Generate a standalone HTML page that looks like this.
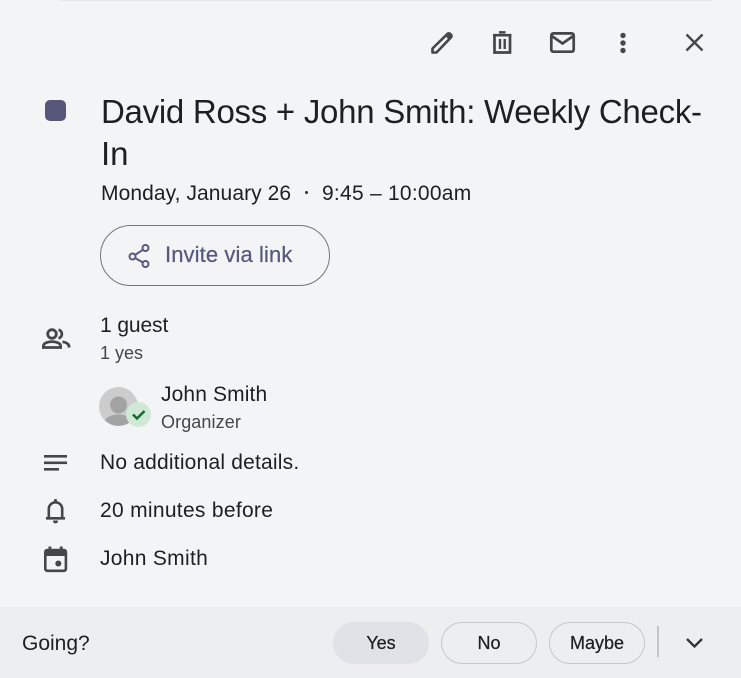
<!DOCTYPE html>
<html>
<head>
<meta charset="utf-8">
<style>
html{background:#f3f4f6;}
html,body{margin:0;padding:0;}
body{width:741px;height:678px;overflow:hidden;background:#f3f4f6;position:relative;font-family:"Liberation Sans",sans-serif;color:#1f1f1f;}
.t{position:absolute;white-space:nowrap;line-height:1;}
svg{position:absolute;overflow:visible;}
.btn{position:absolute;box-sizing:border-box;top:622px;height:42px;width:96px;border-radius:21px;border:1.5px solid #c6c7c8;text-align:center;font-size:18px;line-height:40px;color:#1f1f1f;-webkit-text-stroke:.25px #1f1f1f;}
</style>
</head>
<body>
<div style="position:absolute;left:60px;top:0;width:652px;height:1px;background:#e6e7e8"></div>

<!-- toolbar -->
<svg style="left:430px;top:30px" width="25" height="25" viewBox="0 0 25 25" fill="none" stroke="#444746" stroke-width="2.600"><path d="M2.500 22.500v-4L17.500 3.800a1.800 1.800 0 0 1 2.500 0l1 1a1.800 1.800 0 0 1 0 2.500L6.500 22.500z" stroke-linejoin="round"/><path d="M17.500 5.500l2.500 2.500" stroke-width="4"/></svg>
<svg style="left:490px;top:30px" width="25" height="25" viewBox="0 0 25 25" fill="none" stroke="#444746" stroke-width="2.700"><path d="M4.500 5.500v17h15.500v-17"/><path d="M3 5.200h18.500"/><path d="M9 2.300h6.500" stroke-width="2.400"/><path d="M10 9v10M14.700 9v10" stroke-width="2.400"/></svg>
<svg style="left:549px;top:30px" width="27" height="24" viewBox="0 0 27 24" fill="none" stroke="#444746" stroke-width="2.700"><rect x="2.300" y="3.400" width="22.400" height="18.300" rx="2"/><path d="M2.800 6l10.700 7.500L24.200 6" stroke-linejoin="miter"/></svg>
<svg style="left:616.500px;top:30px" width="12" height="24" viewBox="0 0 12 24" fill="#444746"><circle cx="6" cy="5.500" r="2.700"/><circle cx="6" cy="13" r="2.700"/><circle cx="6" cy="20.500" r="2.700"/></svg>
<svg style="left:684px;top:32px" width="21" height="21" viewBox="0 0 21 21" fill="none" stroke="#444746" stroke-width="2.400"><path d="M2.500 2.500l16 16M18.500 2.500l-16 16"/></svg>

<!-- title -->
<div style="position:absolute;left:45px;top:100px;width:21px;height:21px;border-radius:5px;background:#56567a"></div>
<div class="t" style="left:101px;top:95px;font-size:33px;letter-spacing:-.27px;color:#1f1f1f">David Ross + John Smith: Weekly Check-</div>
<div class="t" style="left:101px;top:137px;font-size:33px;color:#1f1f1f">In</div>
<div class="t" style="left:101px;top:183px;font-size:21px;letter-spacing:.08px;color:#1f1f1f">Monday, January 26</div>
<div style="position:absolute;left:304.500px;top:190.500px;width:3.500px;height:3.500px;border-radius:50%;background:#333"></div>
<div class="t" style="left:322px;top:183px;font-size:21px;letter-spacing:.25px;color:#1f1f1f">9:45 – 10:00am</div>

<!-- invite -->
<div style="position:absolute;box-sizing:border-box;left:100px;top:225px;width:230px;height:61px;border-radius:30.500px;border:1.500px solid #747775"></div>
<svg style="left:128px;top:243px" width="24" height="26" viewBox="0 0 24 26" fill="none" stroke="#56597c" stroke-width="2"><circle cx="17.500" cy="5" r="3"/><circle cx="4.500" cy="13.500" r="3"/><circle cx="17.500" cy="21" r="3"/><path d="M7 12l8-5.300M7 15l8 4.500"/></svg>
<div class="t" style="left:165px;top:244px;font-size:22px;letter-spacing:.1px;color:#56597c;-webkit-text-stroke:.25px #56597c">Invite via link</div>

<!-- guests -->
<svg style="left:41px;top:327px" width="30" height="25" viewBox="0 0 30 25" fill="none" stroke="#444746" stroke-width="2.800"><circle cx="11" cy="7" r="4.300"/><path d="M2.400 20.500v-1.500c0-2.800 4.300-4.400 8.600-4.400s8.600 1.600 8.600 4.400v1.500z"/><path d="M17.500 2.800a4.300 4.300 0 0 1 0 8.400"/><path d="M21.500 14.800c3.500.6 6.500 2.200 6.500 4.700v1"/></svg>
<div class="t" style="left:100px;top:315px;font-size:21px;letter-spacing:-.1px;color:#1f1f1f">1 guest</div>
<div class="t" style="left:100px;top:344px;font-size:18px;color:#444746">1 yes</div>

<!-- avatar -->
<svg style="left:99px;top:387px" width="52" height="40" viewBox="0 0 52 40">
<defs><clipPath id="a"><circle cx="19.500" cy="19.500" r="19.500"/></clipPath></defs>
<circle cx="19.500" cy="19.500" r="19.500" fill="#cccccc"/>
<g clip-path="url(#a)"><circle cx="19.500" cy="18" r="8.500" fill="#a3a3a3"/><ellipse cx="19.500" cy="37" rx="15" ry="9.500" fill="#a3a3a3"/></g>
<circle cx="39.500" cy="27.500" r="12.500" fill="#cfe9d6"/>
<path d="M34 27.500l4 4 7.500-7.500" fill="none" stroke="#146c2e" stroke-width="2.500"/>
</svg>
<div class="t" style="left:161px;top:384px;font-size:21px;letter-spacing:.12px;color:#1f1f1f">John Smith</div>
<div class="t" style="left:161px;top:413px;font-size:18px;letter-spacing:.1px;color:#444746">Organizer</div>

<!-- details -->
<svg style="left:44px;top:454px" width="24" height="18" viewBox="0 0 24 18" fill="#444746"><rect x="0" y="1" width="23" height="2.600"/><rect x="0" y="7.500" width="23" height="2.600"/><rect x="0" y="14" width="15" height="2.600"/></svg>
<div class="t" style="left:100px;top:452px;font-size:21px;letter-spacing:.2px;color:#1f1f1f">No additional details.</div>

<!-- bell -->
<svg style="left:45px;top:498px" width="22" height="26" viewBox="0 0 22 26" fill="none" stroke="#444746" stroke-width="2.600"><path d="M1 20.300h19"/><path d="M3.800 20v-9a6.700 6.700 0 0 1 13.400 0v9"/><path d="M10.500 1v3"/><path d="M8 22.500h5v.5a2.500 2.500 0 0 1-5 0z" fill="#444746" stroke="none"/></svg>
<div class="t" style="left:100px;top:500px;font-size:21px;letter-spacing:.3px;color:#1f1f1f">20 minutes before</div>

<!-- calendar -->
<svg style="left:44px;top:546px" width="24" height="27" viewBox="0 0 24 27" fill="none"><rect x="1.300" y="4" width="20.600" height="20.800" rx="2" stroke="#444746" stroke-width="2.600"/><rect x="1" y="3.500" width="21" height="6.500" fill="#444746"/><rect x="4.500" y="0.500" width="2.800" height="4" fill="#444746"/><rect x="15.800" y="0.500" width="2.800" height="4" fill="#444746"/><circle cx="14.300" cy="17.500" r="3" fill="#444746"/></svg>
<div class="t" style="left:100px;top:548px;font-size:21px;letter-spacing:.3px;color:#1f1f1f">John Smith</div>

<!-- footer -->
<div style="position:absolute;left:0;top:607px;width:741px;height:71px;background:#edeef0"></div>
<div class="t" style="left:22px;top:633px;font-size:21px;color:#1f1f1f">Going?</div>
<div class="btn" style="left:333px;background:#dfe3e7;border-color:#dfe3e7">Yes</div>
<div class="btn" style="left:441px">No</div>
<div class="btn" style="left:549px">Maybe</div>
<div style="position:absolute;left:657px;top:626px;width:1.500px;height:31px;background:#c4c5c6"></div>
<svg style="left:685px;top:637px" width="19" height="12" viewBox="0 0 19 12" fill="none" stroke="#333" stroke-width="2.300"><path d="M2 2l7.500 7.500L17 2"/></svg>
</body>
</html>
